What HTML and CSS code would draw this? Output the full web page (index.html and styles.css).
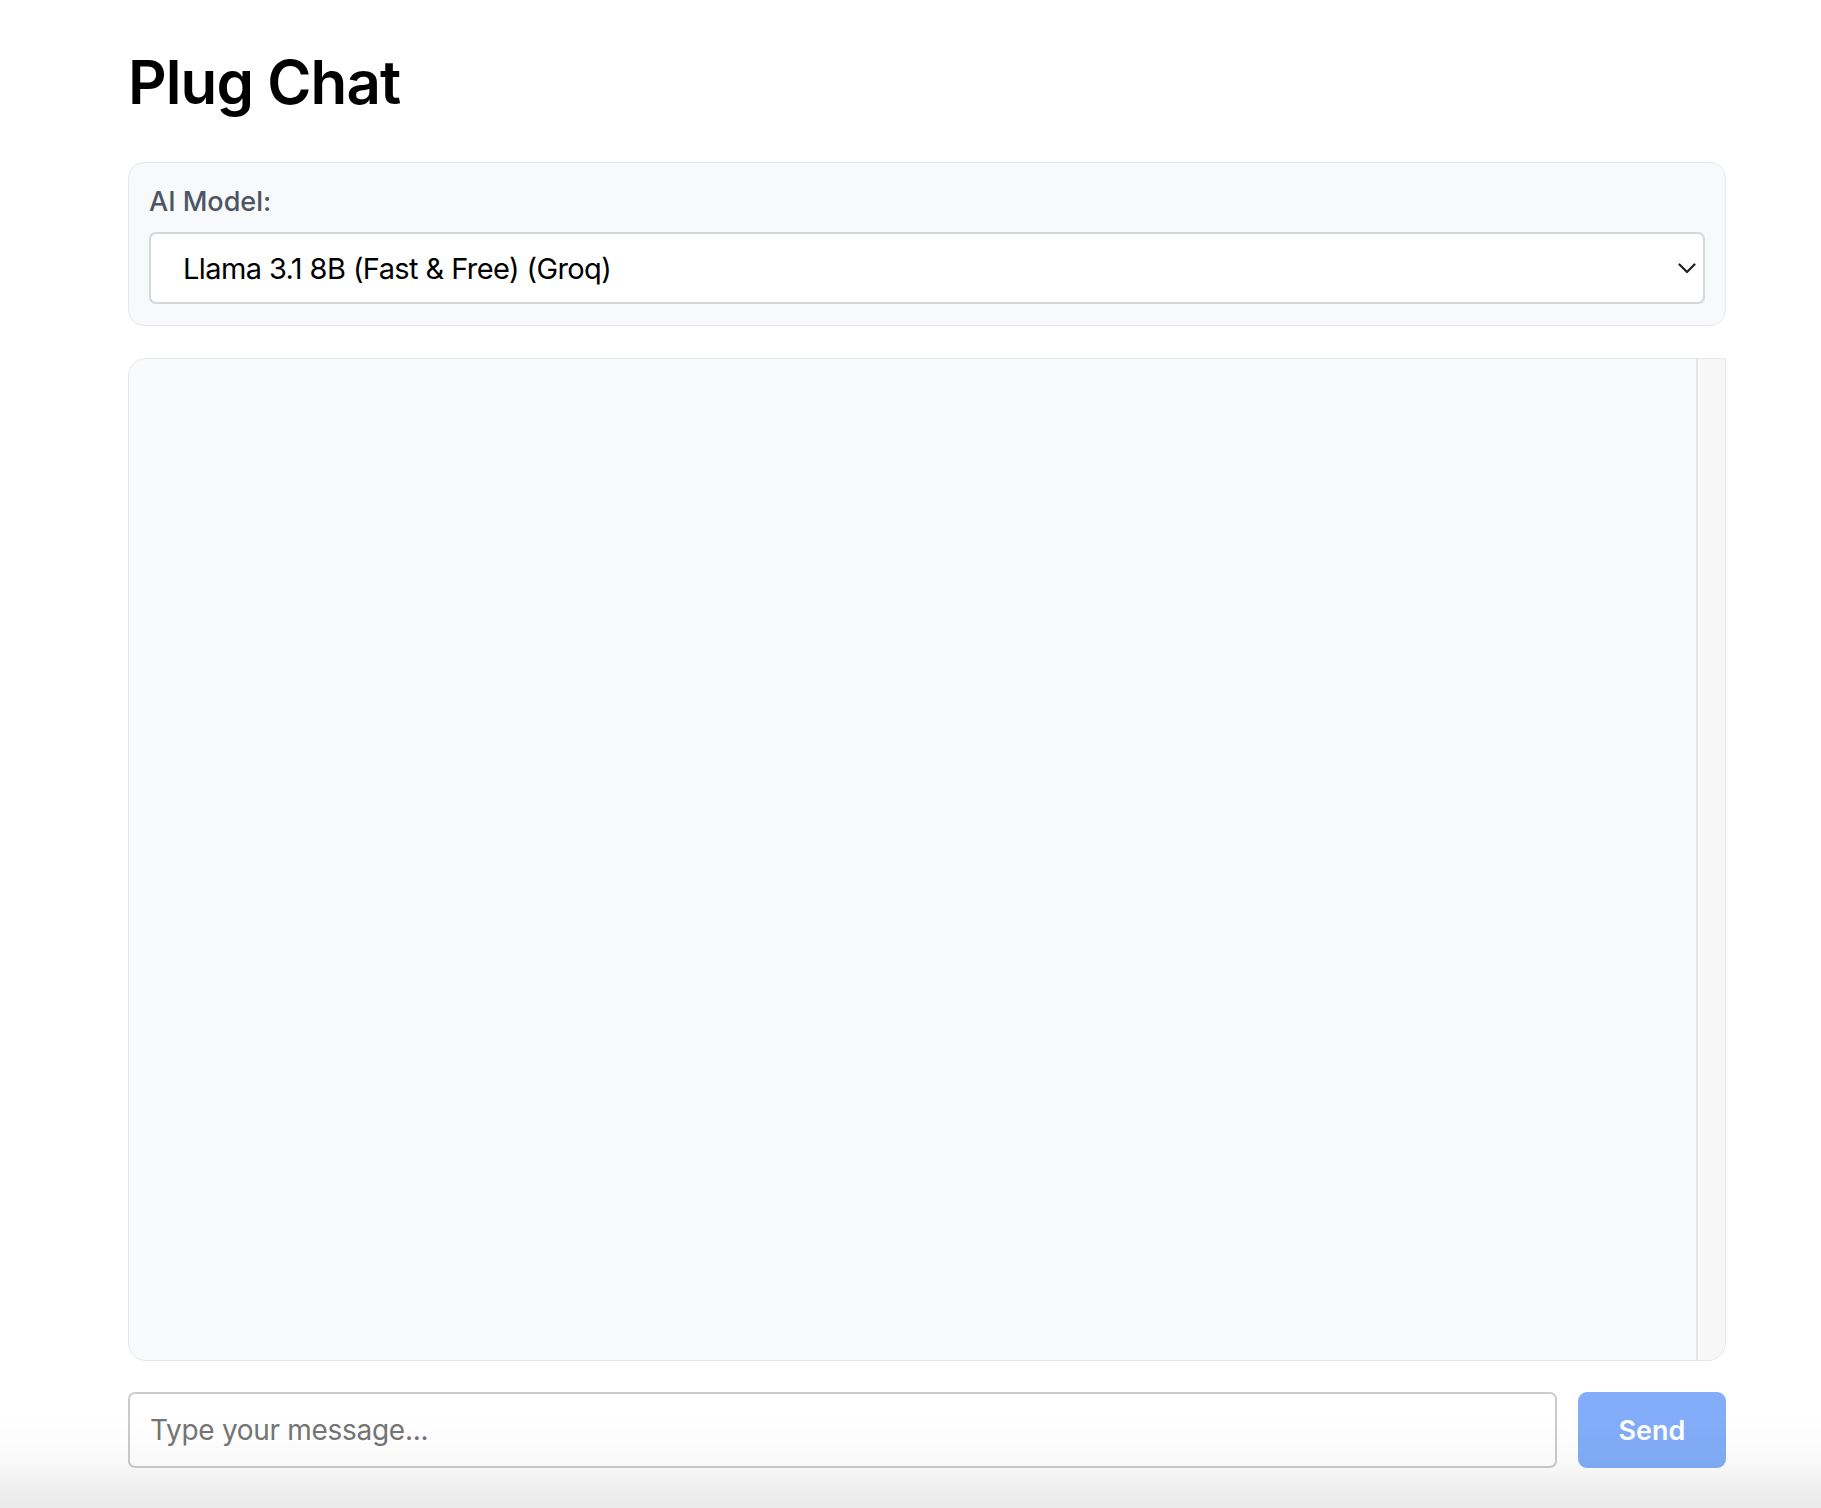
FILE: index.html
```html
<!DOCTYPE html>
<html lang="en">
<head>
<meta charset="utf-8">
<title>Plug Chat</title>
<link rel="stylesheet" href="styles.css">
</head>
<body>
<main class="app">
  <h1 class="title">Plug Chat</h1>
  <section class="model-card">
    <label class="model-label">AI Model:</label>
    <div class="select">
      <span class="select-text">Llama 3.1 8B (Fast &amp; Free) (Groq)</span>
      <svg class="chevron" width="18" height="11" viewBox="0 0 18 11" fill="none" stroke="#1f1f1f" stroke-width="2.2" stroke-linecap="round" stroke-linejoin="round"><path d="M1.5 1.5 L9 9 L16.5 1.5"/></svg>
    </div>
  </section>
  <section class="chat">
    <div class="chat-messages"></div>
    <div class="chat-gutter"></div>
  </section>
  <form class="composer">
    <input class="message" type="text" placeholder="Type your message...">
    <button class="send" type="button">Send</button>
  </form>
</main>
<div class="bottom-shade"></div>
</body>
</html>
```

FILE: styles.css
```css
html, body {
  margin: 0;
  padding: 0;
  background: #ffffff;
}
body {
  font-family: Inter, "Noto Sans", "Liberation Sans", sans-serif;
  color: #000;
}
.app {
  width: 1598px;
  margin-left: 128px;
  padding-top: 46px;
}
.title {
  margin: 0;
  font-size: 60px;
  line-height: 72px;
  font-weight: 600;
  letter-spacing: -0.9px;
  color: #000;
}
.model-card {
  margin-top: 44px;
  background: #f8f9fa;
  border: 1px solid #e5e7eb;
  border-radius: 16px;
  padding: 23px 20px 21px 20px;
}
.model-label {
  display: block;
  font-size: 27px;
  line-height: 31px;
  font-weight: 500;
  color: #4b5563;
}
.select {
  margin-top: 15px;
  height: 72px;
  box-sizing: border-box;
  background: #fff;
  border: 2px solid #d3d6db;
  border-radius: 7px;
  display: flex;
  align-items: center;
  justify-content: space-between;
  padding: 0 7px 0 32px;
}
.select-text {
  font-size: 29px;
  letter-spacing: -0.6px;
  color: #000;
}
.chevron {
  display: block;
}
.chat {
  margin-top: 32px;
  height: 1003px;
  box-sizing: border-box;
  background: #f9fafb;
  border: 1px solid #e5e7eb;
  border-top-left-radius: 18px;
  border-bottom-left-radius: 18px;
  border-bottom-right-radius: 18px;
  overflow: hidden;
  display: flex;
}
.chat-messages {
  flex: 1;
}
.chat-gutter {
  width: 27px;
  background: #f7f7f7;
  border-left: 2px solid #e6e6e6;
}
.composer {
  margin: 31px 0 0 0;
  display: flex;
  gap: 21px;
  height: 76px;
}
.message {
  flex: 1;
  box-sizing: border-box;
  height: 76px;
  border: 2px solid #cccccc;
  border-radius: 7px;
  padding: 0 20px;
  font-family: Inter, "Noto Sans", "Liberation Sans", sans-serif;
  font-size: 28px;
  letter-spacing: -0.3px;
  background: #fff;
  outline: none;
}
.message::placeholder {
  color: #757575;
}
.send {
  width: 148px;
  height: 76px;
  border: none;
  border-radius: 9px;
  background: #83adf8;
  color: #fff;
  font-family: Inter, "Noto Sans", "Liberation Sans", sans-serif;
  font-size: 27px;
  font-weight: 600;
}
.bottom-shade {
  position: fixed;
  left: 0;
  right: 0;
  bottom: 0;
  height: 90px;
  pointer-events: none;
  background: linear-gradient(to bottom, rgba(0,0,0,0) 0%, rgba(0,0,0,0.02) 45%, rgba(0,0,0,0.085) 100%);
}
```
